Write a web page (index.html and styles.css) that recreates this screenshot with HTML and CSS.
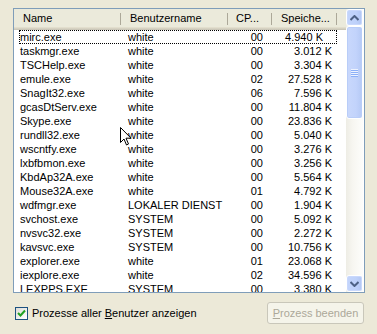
FILE: index.html
```html
<!DOCTYPE html>
<html lang="de">
<head>
  <meta charset="UTF-8">
  <title>Prozesse</title>
  <link rel="stylesheet" href="styles.css">
</head>
<body>
  <div class="panel">
    <div class="frame">
      <div class="list">
        <div class="head">
          <span class="hcol">Name</span>
          <span class="hcol">Benutzername</span>
          <span class="hcol">CP...</span>
          <span class="hcol">Speiche...</span>
          <span class="hfill"></span>
        </div>
        <div class="rows">
          <div class="row focus"><span>mirc.exe</span><span>white</span><span class="cpu">00</span><span class="mem">4.940 K</span></div>
          <div class="row"><span>taskmgr.exe</span><span>white</span><span class="cpu">00</span><span class="mem">3.012 K</span></div>
          <div class="row"><span>TSCHelp.exe</span><span>white</span><span class="cpu">00</span><span class="mem">3.304 K</span></div>
          <div class="row"><span>emule.exe</span><span>white</span><span class="cpu">02</span><span class="mem">27.528 K</span></div>
          <div class="row"><span>SnagIt32.exe</span><span>white</span><span class="cpu">06</span><span class="mem">7.596 K</span></div>
          <div class="row"><span>gcasDtServ.exe</span><span>white</span><span class="cpu">00</span><span class="mem">11.804 K</span></div>
          <div class="row"><span>Skype.exe</span><span>white</span><span class="cpu">00</span><span class="mem">23.836 K</span></div>
          <div class="row"><span>rundll32.exe</span><span>white</span><span class="cpu">00</span><span class="mem">5.040 K</span></div>
          <div class="row"><span>wscntfy.exe</span><span>white</span><span class="cpu">00</span><span class="mem">3.276 K</span></div>
          <div class="row"><span>lxbfbmon.exe</span><span>white</span><span class="cpu">00</span><span class="mem">3.256 K</span></div>
          <div class="row"><span>KbdAp32A.exe</span><span>white</span><span class="cpu">00</span><span class="mem">5.564 K</span></div>
          <div class="row"><span>Mouse32A.exe</span><span>white</span><span class="cpu">01</span><span class="mem">4.792 K</span></div>
          <div class="row"><span>wdfmgr.exe</span><span>LOKALER DIENST</span><span class="cpu">00</span><span class="mem">1.904 K</span></div>
          <div class="row"><span>svchost.exe</span><span>SYSTEM</span><span class="cpu">00</span><span class="mem">5.092 K</span></div>
          <div class="row"><span>nvsvc32.exe</span><span>SYSTEM</span><span class="cpu">00</span><span class="mem">2.272 K</span></div>
          <div class="row"><span>kavsvc.exe</span><span>SYSTEM</span><span class="cpu">00</span><span class="mem">10.756 K</span></div>
          <div class="row"><span>explorer.exe</span><span>white</span><span class="cpu">01</span><span class="mem">23.068 K</span></div>
          <div class="row"><span>iexplore.exe</span><span>white</span><span class="cpu">02</span><span class="mem">34.596 K</span></div>
          <div class="row"><span>LEXPPS.EXE</span><span>SYSTEM</span><span class="cpu">00</span><span class="mem">3.380 K</span></div>
        </div>
      </div>
      <div class="scroll">
        <div class="sbtn">
          <svg width="9" height="6" viewBox="0 0 9 6"><path d="M0.5 5 L4.5 1 L8.5 5" fill="none" stroke="#4d6185" stroke-width="2"/></svg>
        </div>
        <div class="thumb">
          <div class="grip"><i></i><i></i><i></i><i></i></div>
        </div>
        <div class="track"></div>
        <div class="sbtn">
          <svg width="9" height="6" viewBox="0 0 9 6"><path d="M0.5 1 L4.5 5 L8.5 1" fill="none" stroke="#4d6185" stroke-width="2"/></svg>
        </div>
      </div>
    </div>

    <div class="bottom">
      <label class="check">
        <span class="box">
          <svg width="9" height="9" viewBox="0 0 9 9"><path d="M1 4 L3.5 6.5 L8 1.5" fill="none" stroke="#21a121" stroke-width="2"/></svg>
        </span>
        <span>Prozesse aller <u>B</u>enutzer anzeigen</span>
      </label>
      <button class="end" disabled><u>P</u>rozess beenden</button>
    </div>
  </div>

  <!-- mouse pointer in the screenshot -->
  <svg class="cursor" width="12" height="19" viewBox="0 0 12 19">
    <path d="M0.5 0.5 L0.5 15.5 L4 12 L6.5 18 L8.5 17 L6 11.2 L11 11.2 Z" fill="#fff" stroke="#000" stroke-width="1"/>
  </svg>
</body>
</html>
```

FILE: styles.css
```css
body { margin: 0; background: #ece9d8; font-family: Tahoma, "Liberation Sans", sans-serif; font-size: 11px; color: #000; }
.panel { width: 377px; height: 334px; padding: 8px 0 0 13px; box-sizing: border-box; }

.frame { display: flex; width: 352px; height: 285px; border: 1px solid #7f9db9; box-sizing: border-box; background: #fff; }
.list { width: 332px; overflow: hidden; }

.head { display: grid; grid-template-columns: 107px 107px 44px 65px 1fr; height: 21px; background: #ebeadb; box-shadow: inset 0 -1px #cbc7b8, inset 0 -2px #d6d2c2, inset 0 -3px #e2decd; }
.hcol { position: relative; padding: 0 0 0 9px; line-height: 19px; white-space: nowrap; overflow: hidden; }
.hcol + .hcol { padding-left: 9px; }
.hcol::after { content: ""; position: absolute; right: 0; top: 4px; bottom: 5px; width: 1px; background: #aca899; box-shadow: 1px 0 #fff; }
.hcol:nth-child(3) { padding-left: 8px; }

.rows { display: flex; flex-direction: column; }
.row { display: grid; grid-template-columns: 107px 107px 44px 65px; height: 14px; line-height: 14px; flex: none; white-space: nowrap; }
.row span { padding-left: 6px; overflow: hidden; }
.row span:nth-child(2) { padding-left: 7px; }
.row .cpu { text-align: right; padding: 0 9px 0 0; }
.row .mem { text-align: right; padding: 0 5px 0 0; }
.row.focus { outline: 1px dotted #000; outline-offset: -1px; margin: 0 9px 0 5px; grid-template-columns: 102px 107px 44px 56px; }
.row.focus span:first-child { padding-left: 1px; }

.scroll { width: 17px; display: flex; flex-direction: column; background: linear-gradient(to right, #eeede5, #f7f6f1 40%, #fdfdfb); }
.sbtn { height: 17px; flex: none; display: flex; align-items: center; justify-content: center; box-sizing: border-box; border: 1px solid #fff; border-radius: 3px; background: linear-gradient(to right, #c4d5fc, #bed1fa 60%, #b2c6f3); box-shadow: inset 0 0 0 1px #c9d8fc; }
.thumb { height: 93px; flex: none; box-sizing: border-box; border: 1px solid #fff; border-radius: 3px; background: linear-gradient(to right, #c9d8fc, #c2d3fb 60%, #b5c9f5); display: flex; align-items: center; justify-content: center; box-shadow: inset 0 0 0 1px #b9cdf8; }
.grip { display: flex; flex-direction: column; gap: 1px; }
.grip i { display: block; width: 7px; height: 1px; background: #eef3fe; box-shadow: 0 1px #8cb0f8; }
.track { flex: 1; }

.bottom { display: flex; justify-content: space-between; align-items: center; width: 351px; margin-top: 9px; }
.check { display: flex; align-items: center; gap: 4px; margin-left: 2px; }
.box { width: 13px; height: 13px; box-sizing: border-box; border: 1px solid #1c5180; background: linear-gradient(135deg, #dcdcd7, #fff); display: flex; align-items: center; justify-content: center; }
.end { width: 97px; height: 22px; font: inherit; color: #aca899; background: #f5f4ea; border: 1px solid #c9c7ba; border-radius: 3px; padding: 0; }

.cursor { position: absolute; left: 120px; top: 127px; }
```
